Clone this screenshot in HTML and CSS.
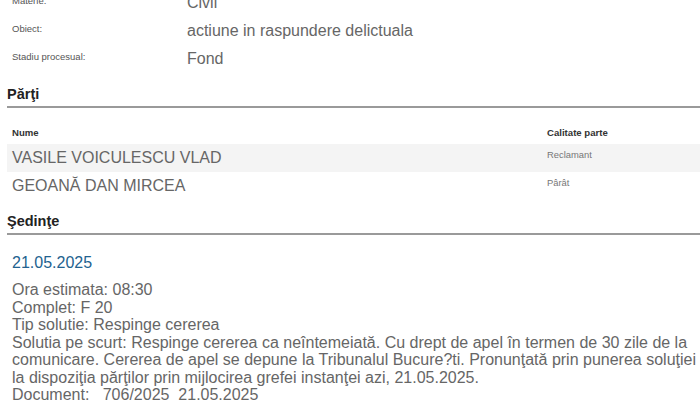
FILE: index.html
```html
<!DOCTYPE html>
<html>
<head>
<meta charset="utf-8">
<link rel="stylesheet" href="styles.css">
</head>
<body>
<div class="page">
  <div class="details">
    <div class="row"><div class="label">Materie:</div><div class="value">Civil</div></div>
    <div class="row"><div class="label">Obiect:</div><div class="value">actiune in raspundere delictuala</div></div>
    <div class="row"><div class="label">Stadiu procesual:</div><div class="value">Fond</div></div>
  </div>
  <h2 class="section">Părţi</h2>
  <div class="table">
    <div class="thead"><div class="c1">Nume</div><div class="c2">Calitate parte</div></div>
    <div class="trow alt"><div class="c1 name">VASILE VOICULESCU VLAD</div><div class="c2 role">Reclamant</div></div>
    <div class="trow"><div class="c1 name">GEOANĂ DAN MIRCEA</div><div class="c2 role">Pârât</div></div>
  </div>
  <h2 class="section">Şedinţe</h2>
  <div class="session">
    <div class="date">21.05.2025</div>
    <div class="body">
      Ora estimata: 08:30<br>
      Complet: F 20<br>
      Tip solutie: Respinge cererea<br>
      Solutia pe scurt: Respinge cererea ca neîntemeiată. Cu drept de apel în termen de 30 zile de la comunicare. Cererea de apel se depune la Tribunalul Bucure?ti. Pronunţată prin punerea soluţiei la dispoziţia părţilor prin mijlocirea grefei instanţei azi, 21.05.2025.<br>
      Document: &nbsp; 706/2025 &nbsp;21.05.2025
    </div>
  </div>
</div>
</body>
</html>
```

FILE: styles.css
```css
html, body {
  margin: 0;
  padding: 0;
  background: #fff;
}
body {
  font-family: "Liberation Sans", Arial, sans-serif;
  overflow: hidden;
}
.page {
  margin-top: -9px;
  padding-left: 7px;
}
.details {
  display: flex;
  flex-direction: column;
  padding-left: 5px;
}
.row {
  display: grid;
  grid-template-columns: 175px 1fr;
  height: 28px;
  align-items: start;
}
.label {
  font-size: 9.5px;
  color: #555;
  padding-top: 4px;
}
.value {
  font-size: 16px;
  color: #666;
  padding-top: 3px;
}
.section {
  margin: 11px 0 0 0;
  font-size: 14.5px;
  font-weight: bold;
  color: #222;
  padding-bottom: 3px;
  border-bottom: 2px solid #9a9a9a;
  line-height: 17px;
}
.table {
  margin-top: 19px;
  display: flex;
  flex-direction: column;
}
.thead, .trow {
  display: grid;
  grid-template-columns: 535px 1fr;
  padding-left: 5px;
}
.thead {
  font-size: 9.6px;
  font-weight: bold;
  color: #333;
  height: 17px;
}
.trow {
  height: 28px;
  align-items: start;
}
.trow.alt {
  background: #f4f4f4;
}
.name {
  font-size: 16px;
  color: #666;
  padding-top: 5px;
}
.role {
  font-size: 9.4px;
  color: #777;
  padding-top: 5px;
}
.table + .section {
  margin-top: 13px;
}
.session {
  padding-left: 5px;
  padding-top: 19px;
}
.date {
  font-size: 16px;
  color: #22628f;
  margin-bottom: 9px;
}
.body {
  font-size: 16px;
  color: #666;
  line-height: 17.5px;
}
```
